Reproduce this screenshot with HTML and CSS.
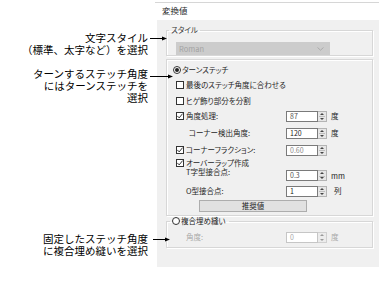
FILE: index.html
```html
<!DOCTYPE html>
<html lang="ja">
<head>
<meta charset="utf-8">
<title>変換値</title>
<link rel="stylesheet" href="styles.css">
</head>
<body>
<div class="page">
  <div class="notes">
    <div class="note n1"><span class="ln">文字スタイル</span><span class="ln">（標準、太字など）を選択</span><svg class="arrow a1" width="18" height="5" viewBox="0 0 18 5"><line x1="0" y1="2.5" x2="14" y2="2.5" stroke="#000" stroke-width="1"/><polygon points="12,0.5 17,2.5 12,4.5" fill="#000"/></svg></div>
    <div class="note n2"><span class="ln">ターンするステッチ角度</span><span class="ln">にはターンステッチを</span><span class="ln">選択</span><svg class="arrow a2" width="24" height="5" viewBox="0 0 24 5"><line x1="0" y1="2.5" x2="20" y2="2.5" stroke="#000" stroke-width="1"/><polygon points="18,0.5 23,2.5 18,4.5" fill="#000"/></svg></div>
    <div class="note n3"><span class="ln">固定したステッチ角度</span><span class="ln">に複合埋め縫いを選択</span><svg class="arrow a3" width="18" height="5" viewBox="0 0 18 5"><line x1="0" y1="2.5" x2="14" y2="2.5" stroke="#000" stroke-width="1"/><polygon points="12,0.5 17,2.5 12,4.5" fill="#000"/></svg></div>
  </div>
  <div class="dialog">
    <div class="title">変換値</div>
    <div class="panel">
      <fieldset class="box box1">
        <legend class="legend">スタイル</legend>
        <div class="combo"><span class="combo-text">Roman</span><svg class="chev" width="7" height="4" viewBox="0 0 7 4"><polyline points="0.5,0.5 3.5,3.2 6.5,0.5" fill="none" stroke="#a8a8a8" stroke-width="0.9"/></svg></div>
      </fieldset>

      <div class="box box2">
        <div class="row r-radio">
          <div class="lab lab-radio"><span class="radio on"></span><span>ターンステッチ</span></div>
        </div>
        <div class="row r-cb1">
          <div class="lab lab-cb"><span class="cb"></span><span>最後のステッチ角度に合わせる</span></div>
        </div>
        <div class="row r-cb2">
          <div class="lab lab-cb"><span class="cb"></span><span>ヒゲ飾り部分を分割</span></div>
        </div>
        <div class="row r-cb3">
          <div class="lab lab-cb"><span class="cb"><svg width="8" height="8" viewBox="0 0 8 8"><polyline points="1.3,3.9 3.2,5.9 6.6,1.6" fill="none" stroke="#222" stroke-width="0.9"/></svg></span><span>角度処理:</span></div>
          <div class="spin"><span class="field v-mid">87</span><span class="arrows"></span></div>
          <span class="unit">度</span>
        </div>
        <div class="row r-corner">
          <div class="lab lab-ind">コーナー検出角度:</div>
          <div class="spin"><span class="field">120</span><span class="arrows"></span></div>
          <span class="unit">度</span>
        </div>
        <div class="row r-cb4">
          <div class="lab lab-cb"><span class="cb"><svg width="8" height="8" viewBox="0 0 8 8"><polyline points="1.3,3.9 3.2,5.9 6.6,1.6" fill="none" stroke="#222" stroke-width="0.9"/></svg></span><span>コーナーフラクション:</span></div>
          <div class="spin"><span class="field v-light">0.60</span><span class="arrows"></span></div>
        </div>
        <div class="row r-cb5">
          <div class="lab lab-cb"><span class="cb"><svg width="8" height="8" viewBox="0 0 8 8"><polyline points="1.3,3.9 3.2,5.9 6.6,1.6" fill="none" stroke="#222" stroke-width="0.9"/></svg></span><span>オーバーラップ作成</span></div>
        </div>
        <div class="row r-t">
          <div class="lab lab-ind2 lab-top">T字型接合点:</div>
          <div class="spin spin-low"><span class="field v-mid">0.3</span><span class="arrows"></span></div>
          <span class="unit unit-low">mm</span>
        </div>
        <div class="row r-o">
          <div class="lab lab-ind2">O型接合点:</div>
          <div class="spin"><span class="field">1</span><span class="arrows"></span></div>
          <span class="unit unit-wide">列</span>
        </div>
        <div class="btn">推奨値</div>
      </div>

      <fieldset class="box box3">
        <legend class="legend legend-radio"><span class="radio"></span><span>複合埋め縫い</span></legend>
        <div class="row r-angle">
          <div class="lab lab-ind2 dis">角度:</div>
          <div class="spin spin-dis"><span class="field">0</span><span class="arrows"></span></div>
          <span class="unit dis">度</span>
        </div>
      </fieldset>
    </div>
  </div>
</div>
</body>
</html>
```

FILE: styles.css
```css
html, body {
  margin: 0;
  padding: 0;
  background: #ffffff;
}

.page {
  display: flex;
  width: 379px;
  height: 284px;
  overflow: hidden;
}

/* ---------- annotations ---------- */
.notes {
  width: 148px;
  padding-right: 7px;
  padding-top: 32px;
  text-align: right;
  font-family: "Noto Sans CJK JP", sans-serif;
  font-size: 10.5px;
  line-height: 12px;
  color: #000;
  flex: none;
}

.note {
  position: relative;
  white-space: nowrap;
}

.ln {
  display: block;
  height: 12px;
}

.n2 { margin-top: 12px; }
.n3 { margin-top: 129px; }

.arrow {
  position: absolute;
  left: 100%;
  display: block;
}
.a1 { top: 4px; margin-left: 2px; }
.a2 { top: 6px; margin-left: 2px; }
.a3 { top: 4px; margin-left: 5px; }

/* ---------- dialog ---------- */
.dialog {
  width: 224px;
  padding-top: 2px;
  flex: none;
  font-family: "Noto Sans CJK JP", sans-serif;
  font-feature-settings: "palt";
  color: #1e1e1e;
}

.title {
  border-top: 1px solid #d6d6d6;
  height: 17px;
  line-height: 15px;
  padding-left: 7px;
  font-size: 8.5px;
  color: #2a2a2a;
}

.panel {
  margin-left: 2px;
  width: 207px;
  height: 234px;
  padding: 5px 6px 8px 9px;
  background: #f0f0f0;
  font-size: 7.5px;
}

.box {
  border: 1px solid #d7d7d7;
  box-shadow: 1px 1px 0 #ffffff, inset 1px 1px 0 #ffffff;
  box-sizing: border-box;
  width: 207px;
}

fieldset.box {
  margin: 0;
  padding: 0;
  min-width: 0;
}

.legend {
  margin-left: 2px;
  padding: 0 2px;
  line-height: 10px;
  height: 10px;
  font-size: 7.5px;
  color: #333;
}

/* box 1 */
.box1 {
  padding-bottom: 5px;
}

.combo {
  margin: 7px 0 0 9px;
  width: 154px;
  height: 13px;
  background: #cccccc;
  box-sizing: border-box;
  display: flex;
  align-items: center;
  justify-content: space-between;
  padding: 0 6px 0 3px;
}

.combo-text {
  color: #a3a3a3;
  font-size: 7.5px;
  line-height: 13px;
}

.chev { display: block; }

/* box 2 */
.box2 {
  margin-top: 3px;
  padding-bottom: 3px;
}

.row {
  display: flex;
  align-items: center;
  height: 12px;
}

.r-radio { margin-top: 4px; }
.r-cb1 { margin-top: 3px; }
.r-cb2 { margin-top: 4px; }
.r-cb3 { margin-top: 3px; }
.r-corner { margin-top: 5px; }
.r-cb4 { margin-top: 5px; }
.r-cb5 { margin-top: 2px; height: 10px; }
.r-t { height: 14px; align-items: flex-start; }
.r-o { margin-top: 3px; }
.r-angle { margin-top: 5px; }

.lab {
  width: 119px;
  box-sizing: border-box;
  display: flex;
  align-items: center;
  gap: 2px;
  white-space: nowrap;
  line-height: 10px;
  flex: none;
}

.lab-radio { padding-left: 6px; gap: 1px; }
.lab-cb { padding-left: 9px; }
.lab-ind { padding-left: 22px; }
.lab-ind2 { padding-left: 19px; }
.lab-top { line-height: 8px; height: 8px; }

.cb {
  width: 8px;
  height: 8px;
  box-sizing: border-box;
  border: 1px solid #333;
  background: #fff;
  display: flex;
  align-items: center;
  justify-content: center;
  flex: none;
  overflow: hidden;
}
.cb svg { display: block; flex: none; }

.radio {
  width: 8px;
  height: 8px;
  box-sizing: border-box;
  border: 1px solid #333;
  border-radius: 50%;
  background: #fff;
  display: inline-flex;
  align-items: center;
  justify-content: center;
  flex: none;
}
.radio.on::after {
  content: "";
  width: 4px;
  height: 4px;
  border-radius: 50%;
  background: #222;
}

.spin {
  display: flex;
  width: 41px;
  height: 11px;
  flex: none;
}
.spin-low { margin-top: 2px; }

.field {
  width: 32px;
  height: 11px;
  box-sizing: border-box;
  border: 1px solid #7a7a7a;
  background: #fff;
  padding-left: 3px;
  font-size: 7px;
  line-height: 9px;
  color: #222;
}
.v-mid { color: #555; }
.v-light { color: #8c8c8c; }

.arrows {
  width: 9px;
  height: 11px;
  box-sizing: border-box;
  border: 1px solid #b4b4b4;
  border-left: none;
  background:
    linear-gradient(#bdbdbd, #bdbdbd) center 4.5px / 6px 1px no-repeat,
    #e6e6e6;
  position: relative;
}
.arrows::before,
.arrows::after {
  content: "";
  position: absolute;
  left: 2px;
  border-left: 2px solid transparent;
  border-right: 2px solid transparent;
}
.arrows::before {
  top: 1px;
  border-bottom: 2px solid #444;
}
.arrows::after {
  bottom: 1px;
  border-top: 2px solid #444;
}

.unit {
  margin-left: 4px;
  font-size: 7.5px;
  line-height: 10px;
  color: #222;
}
.unit-low { margin-top: 2px; line-height: 11px; }
.unit-wide { margin-left: 7px; }

.btn {
  margin: 3px 0 0 32px;
  width: 108px;
  height: 12px;
  box-sizing: border-box;
  border: 1px solid #adadad;
  background: #e1e1e1;
  text-align: center;
  line-height: 10px;
  font-size: 7.5px;
  color: #222;
}

/* box 3 */
.box3 {
  margin-top: 5px;
  padding-bottom: 4px !important;
}

.legend-radio {
  display: flex;
  align-items: center;
  gap: 1px;
  padding: 0 3px 0 2px;
  margin-left: 3px;
  color: #222;
}

.dis { color: #a8a8a8; }

.spin-dis .field {
  border-color: #c6c6c6;
  color: #a8a8a8;
}
.spin-dis .arrows {
  border-color: #d0d0d0;
  background: #ececec;
}
.spin-dis .arrows::before { border-bottom-color: #9a9a9a; }
.spin-dis .arrows::after { border-top-color: #9a9a9a; }
```
